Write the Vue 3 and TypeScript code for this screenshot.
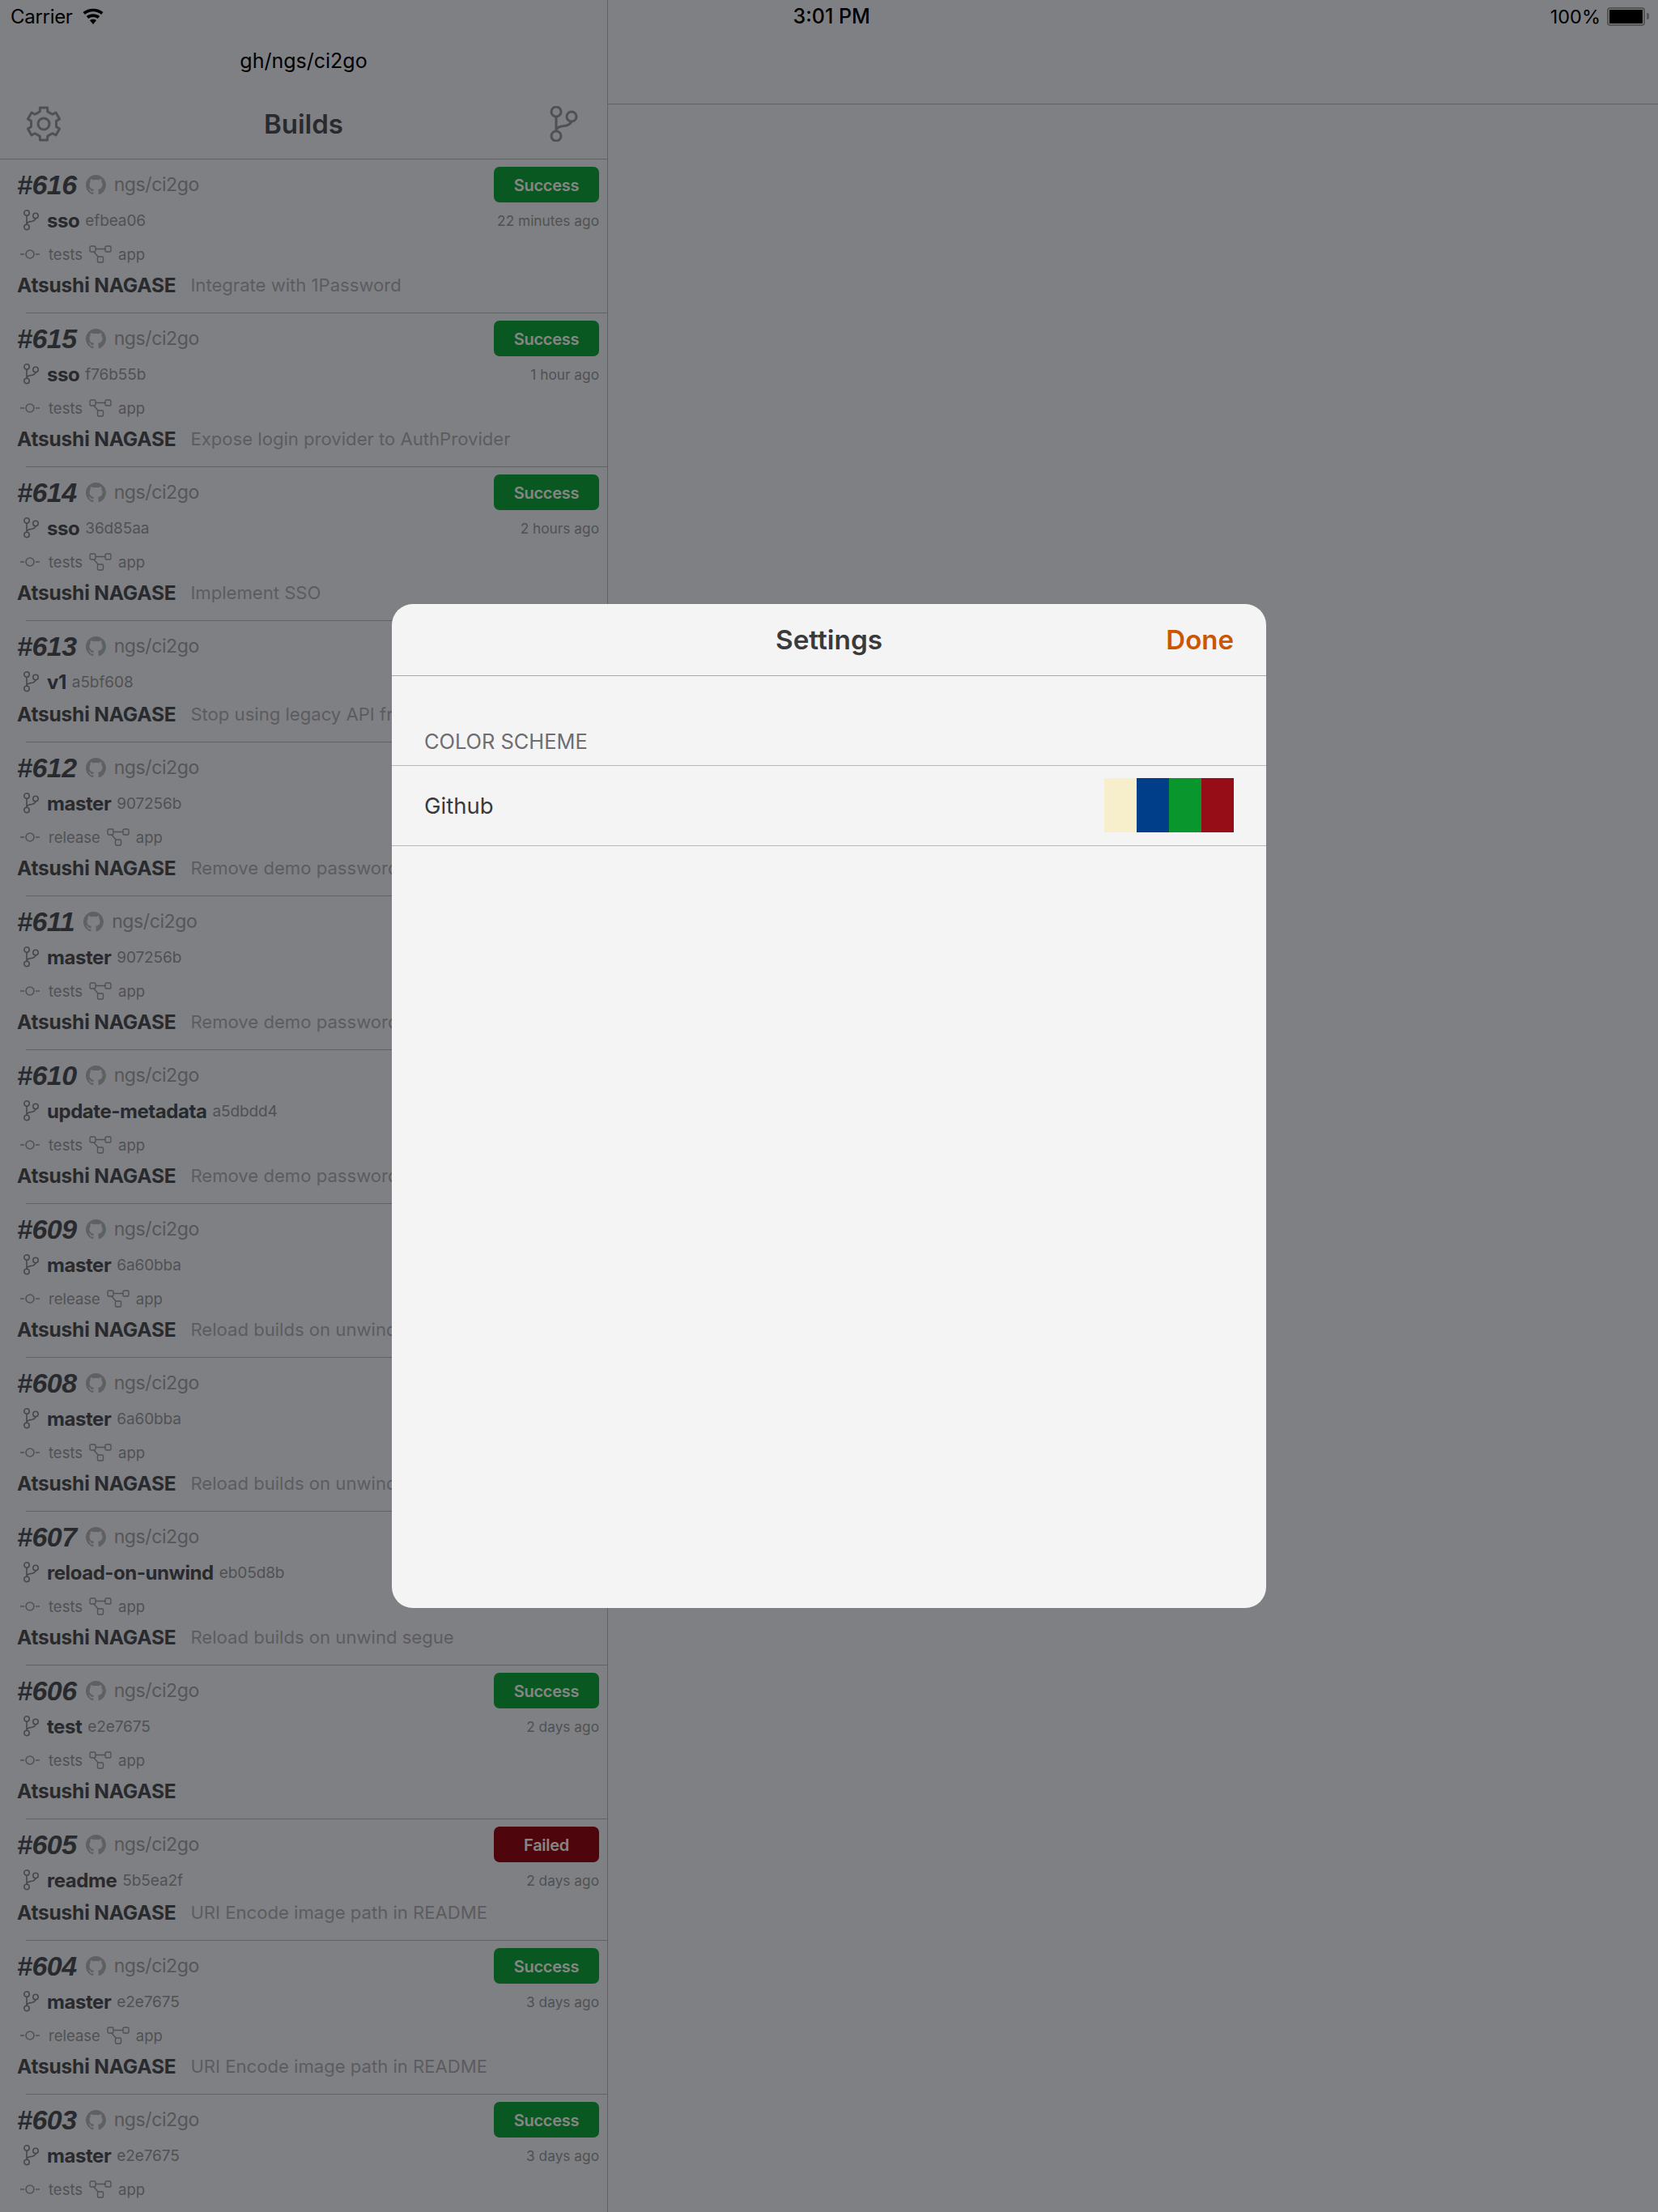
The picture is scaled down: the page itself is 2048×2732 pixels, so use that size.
<template>
    <div class="ipad">
        <div class="split">
            <aside class="master">
                <header class="master-head">
                    <div class="project">gh/ngs/ci2go</div>
                    <div class="nav-row">
                        <svg class="nav-icon" width="44" height="44" viewBox="0 0 44 44">
                            <path :d="gearPath" fill="none" stroke="#989aa0" stroke-width="3" stroke-linejoin="round" />
                            <circle cx="22" cy="22" r="7" fill="none" stroke="#989aa0" stroke-width="3" />
                        </svg>
                        <span class="nav-title">Builds</span>
                        <svg class="nav-icon" width="36" height="44" viewBox="0 0 36 44">
                            <circle cx="9" cy="7" r="6" fill="none" stroke="#989aa0" stroke-width="3" />
                            <circle cx="28" cy="13" r="6" fill="none" stroke="#989aa0" stroke-width="3" />
                            <circle cx="9" cy="37" r="6" fill="none" stroke="#989aa0" stroke-width="3" />
                            <path d="M9 13V31M9 29C12 24 18 25 22 24C25 23 27 21 28 19" fill="none" stroke="#989aa0" stroke-width="3" />
                        </svg>
                    </div>
                </header>
                <div class="build-list">
                    <div class="build" v-for="b in builds" :key="b.num" :class="{ short: !b.job }">
                        <div class="line-1">
                            <span class="num">#{{ b.num }}</span>
                            <svg class="gh" width="25" height="25" viewBox="0 0 16 16">
                                <path fill="#b7b8bd" d="M8 0C3.58 0 0 3.58 0 8c0 3.54 2.29 6.53 5.47 7.59.4.07.55-.17.55-.38 0-.19-.01-.82-.01-1.49-2.01.37-2.53-.49-2.69-.94-.09-.23-.48-.94-.82-1.13-.28-.15-.68-.52-.01-.53.63-.01 1.08.58 1.23.82.72 1.21 1.87.87 2.33.66.07-.52.28-.87.51-1.07-1.78-.2-3.64-.89-3.64-3.95 0-.87.31-1.59.82-2.15-.08-.2-.36-1.02.08-2.12 0 0 .67-.21 2.2.82.64-.18 1.32-.27 2-.27.68 0 1.36.09 2 .27 1.53-1.04 2.2-.82 2.2-.82.44 1.1.16 1.92.08 2.12.51.56.82 1.27.82 2.15 0 3.07-1.87 3.75-3.65 3.95.29.25.54.73.54 1.48 0 1.07-.01 1.93-.01 2.2 0 .21.15.46.55.38A8.013 8.013 0 0 0 16 8c0-4.42-3.58-8-8-8z" />
                            </svg>
                            <span class="repo">ngs/ci2go</span>
                            <span class="badge" :class="b.status">{{ b.status == 'failed' ? 'Failed' : 'Success' }}</span>
                        </div>
                        <div class="line-2">
                            <svg class="branch-icon" width="20" height="26" viewBox="0 0 20 26">
                                <circle cx="5" cy="4" r="3.2" fill="none" stroke="#87898e" stroke-width="1.6" />
                                <circle cx="16" cy="7.5" r="3.2" fill="none" stroke="#87898e" stroke-width="1.6" />
                                <circle cx="5" cy="21.5" r="3.2" fill="none" stroke="#87898e" stroke-width="1.6" />
                                <path d="M5 7.2V18.3M5 17C7 14 11 15 13 14C15 13 16 12 16 10.7" fill="none" stroke="#87898e" stroke-width="1.6" />
                            </svg>
                            <span class="branch">{{ b.branch }}</span>
                            <span class="sha">{{ b.sha }}</span>
                            <span class="time">{{ b.time }}</span>
                        </div>
                        <div class="line-3" v-if="b.job">
                            <svg class="commit-icon" width="26" height="14" viewBox="0 0 26 14">
                                <circle cx="13" cy="7" r="5" fill="none" stroke="#9a9ba0" stroke-width="1.6" />
                                <path d="M1 7H6M20 7H25" stroke="#9a9ba0" stroke-width="1.6" />
                            </svg>
                            <span class="job">{{ b.job }}</span>
                            <svg class="flow-icon" width="28" height="22" viewBox="0 0 28 22">
                                <rect x="1" y="1" width="7" height="7" rx="1.5" fill="none" stroke="#9a9ba0" stroke-width="1.4" />
                                <rect x="20" y="1" width="7" height="7" rx="1.5" fill="none" stroke="#9a9ba0" stroke-width="1.4" />
                                <rect x="10.5" y="14" width="7" height="7" rx="1.5" fill="none" stroke="#9a9ba0" stroke-width="1.4" />
                                <path d="M8 4.5H20M6 8L11 14" fill="none" stroke="#9a9ba0" stroke-width="1.4" />
                            </svg>
                            <span class="job">app</span>
                        </div>
                        <div class="line-4">
                            <span class="author">Atsushi NAGASE</span>
                            <span class="message">{{ b.message }}</span>
                        </div>
                    </div>
                </div>
            </aside>
            <main class="detail">
                <div class="detail-head"></div>
            </main>
        </div>

        <div class="dim"></div>

        <div class="status-bar">
            <div class="carrier">
                <span>Carrier</span>
                <svg width="30" height="22" viewBox="0 0 30 22">
                    <path d="M15 21L11 16.2C13.2 14.4 16.8 14.4 19 16.2Z M9.2 14L6.8 11.1C11.4 7.3 18.6 7.3 23.2 11.1L20.8 14C17.4 11.3 12.6 11.3 9.2 14Z M4.9 8.9L2.5 6C9.5 0.2 20.5 0.2 27.5 6L25.1 8.9C19.3 4.1 10.7 4.1 4.9 8.9Z" fill="#000" />
                </svg>
            </div>
            <div class="clock">3:01 PM</div>
            <div class="battery">
                <span>100%</span>
                <div class="cell"><div class="fill"></div></div>
                <div class="nub"></div>
            </div>
        </div>

        <section class="sheet">
            <div class="sheet-nav">
                <span class="sheet-title">Settings</span>
                <span class="done">Done</span>
            </div>
            <div class="section-head">COLOR SCHEME</div>
            <div class="scheme-row">
                <span class="scheme-name">Github</span>
                <div class="swatches">
                    <i v-for="c in swatches" :key="c" :style="{ backgroundColor: c }"></i>
                </div>
            </div>
        </section>
    </div>
</template>

<script setup lang="ts">
    interface Build {
        num: number
        branch: string
        sha: string
        time: string
        job: string
        message: string
        status: string
    }

    const swatches: string[] = ['#f7eecb', '#003e8a', '#09962c', '#960c17']

    const builds: Build[] = [
        { num: 616, branch: 'sso', sha: 'efbea06', time: '22 minutes ago', job: 'tests', message: 'Integrate with 1Password', status: 'success' },
        { num: 615, branch: 'sso', sha: 'f76b55b', time: '1 hour ago', job: 'tests', message: 'Expose login provider to AuthProvider', status: 'success' },
        { num: 614, branch: 'sso', sha: '36d85aa', time: '2 hours ago', job: 'tests', message: 'Implement SSO', status: 'success' },
        { num: 613, branch: 'v1', sha: 'a5bf608', time: '2 hours ago', job: '', message: 'Stop using legacy API from', status: 'success' },
        { num: 612, branch: 'master', sha: '907256b', time: '1 day ago', job: 'release', message: 'Remove demo password', status: 'success' },
        { num: 611, branch: 'master', sha: '907256b', time: '1 day ago', job: 'tests', message: 'Remove demo password', status: 'success' },
        { num: 610, branch: 'update-metadata', sha: 'a5dbdd4', time: '1 day ago', job: 'tests', message: 'Remove demo password', status: 'success' },
        { num: 609, branch: 'master', sha: '6a60bba', time: '1 day ago', job: 'release', message: 'Reload builds on unwind segue', status: 'success' },
        { num: 608, branch: 'master', sha: '6a60bba', time: '1 day ago', job: 'tests', message: 'Reload builds on unwind segue', status: 'success' },
        { num: 607, branch: 'reload-on-unwind', sha: 'eb05d8b', time: '1 day ago', job: 'tests', message: 'Reload builds on unwind segue', status: 'success' },
        { num: 606, branch: 'test', sha: 'e2e7675', time: '2 days ago', job: 'tests', message: '', status: 'success' },
        { num: 605, branch: 'readme', sha: '5b5ea2f', time: '2 days ago', job: '', message: 'URI Encode image path in README', status: 'failed' },
        { num: 604, branch: 'master', sha: 'e2e7675', time: '3 days ago', job: 'release', message: 'URI Encode image path in README', status: 'success' },
        { num: 603, branch: 'master', sha: 'e2e7675', time: '3 days ago', job: 'tests', message: 'URI Encode image path in README', status: 'success' }
    ]

    // 歯車のアウトライン
    function makeGear(): string {
        const pts: string[] = []
        for (let i = 0; i < 6; i++) {
            const a = -90 + i * 60
            const list: [number, number][] = [[-30, 15.5], [-17, 16], [-13, 20.5], [13, 20.5], [17, 16]]
            for (const [off, r] of list) {
                const rad = ((a + off) * Math.PI) / 180
                pts.push(`${(22 + r * Math.cos(rad)).toFixed(1)} ${(22 + r * Math.sin(rad)).toFixed(1)}`)
            }
        }
        return 'M' + pts.join('L') + 'Z'
    }
    const gearPath = makeGear()
</script>

<style scoped>
.ipad {
    position: relative;
    width: 2048px;
    height: 2732px;
    overflow: hidden;
    background-color: #f4f6fe;
    font-family: Inter, "Liberation Sans", sans-serif;
}
.split {
    display: flex;
    height: 100%;
}
.master {
    width: 751px;
    flex-shrink: 0;
    border-right: 1px solid #babcc2;
    box-sizing: border-box;
    overflow: hidden;
}
.master-head {
    height: 197px;
    padding-top: 40px;
    box-sizing: border-box;
    border-bottom: 1px solid #babcc2;
}
.project {
    height: 70px;
    line-height: 70px;
    text-align: center;
    font-size: 25px;
    color: #000;
}
.nav-row {
    height: 86px;
    padding: 0 36px 0 32px;
    display: flex;
    align-items: center;
    justify-content: space-between;
}
.nav-title {
    margin-right: 4px;
    font-size: 33px;
    font-weight: 600;
    color: #505156;
}
.build {
    height: 190px;
    box-sizing: border-box;
    padding: 9px 10px 0 21px;
    position: relative;
}
.build.short {
    height: 150px;
}
.build::after {
    content: "";
    position: absolute;
    left: 32px;
    right: 0;
    bottom: 0;
    height: 1px;
    background-color: #babcc2;
}
.line-1 {
    height: 44px;
    display: flex;
    align-items: center;
}
.num {
    font-family: "Liberation Sans", Arial, sans-serif;
    font-size: 34px;
    font-weight: 700;
    font-style: italic;
    color: #505156;
    letter-spacing: -.5px;
}
.gh {
    margin-left: 11px;
}
.repo {
    margin-left: 10px;
    font-size: 23px;
    letter-spacing: -.4px;
    color: #a4a5aa;
}
.badge {
    margin-left: auto;
    width: 130px;
    height: 44px;
    line-height: 46px;
    text-align: center;
    border-radius: 7px;
    font-size: 20px;
    font-weight: 600;
    letter-spacing: -.3px;
    color: #fff;
}
.badge.success {
    background-color: #12a840;
}
.badge.failed {
    background-color: #960c17;
}
.line-2 {
    height: 44px;
    display: flex;
    align-items: center;
}
.branch-icon {
    margin-left: 7px;
    margin-right: 10px;
}
.branch {
    font-size: 24px;
    font-weight: 700;
    letter-spacing: -.45px;
    color: #505156;
}
.sha {
    margin-left: 7px;
    font-size: 19px;
    letter-spacing: -.1px;
    color: #9a9ba0;
}
.time {
    margin-left: auto;
    font-size: 17.3px;
    color: #9a9ba0;
}
.line-3 {
    height: 40px;
    display: flex;
    align-items: center;
}
.commit-icon {
    margin-left: 3px;
    margin-right: 10px;
}
.job {
    font-size: 18.5px;
    color: #9a9ba0;
}
.flow-icon {
    margin: 0 8px;
}
.line-4 {
    height: 32px;
    margin-top: 2px;
    display: flex;
    align-items: center;
    white-space: nowrap;
}
.build:last-child .line-4 {
    display: none;
}
.author {
    font-size: 24.5px;
    font-weight: 700;
    letter-spacing: -.2px;
    color: #505156;
}
.message {
    margin-left: 18px;
    font-size: 22.1px;
    color: #b0b1b6;
}
.detail {
    flex: 1;
}
.detail-head {
    height: 129px;
    box-sizing: border-box;
    border-bottom: 1px solid #babcc2;
}
.dim {
    position: absolute;
    inset: 0;
    background-color: rgba(0, 0, 0, .48);
}
.status-bar {
    position: absolute;
    left: 0;
    right: 0;
    top: 0;
    height: 40px;
    padding: 0 11px 0 13px;
    display: flex;
    align-items: center;
    justify-content: space-between;
    font-size: 24px;
    color: #000;
}
.carrier {
    display: flex;
    align-items: center;
    gap: 10px;
}
.carrier span {
    letter-spacing: -.3px;
}
.clock {
    margin-left: 10px;
    font-weight: 500;
    font-size: 25px;
}
.battery {
    display: flex;
    align-items: center;
    font-size: 23.5px;
}
.cell {
    margin-left: 8px;
    width: 47px;
    height: 23px;
    box-sizing: border-box;
    border: 2px solid #555;
    border-radius: 4px;
    padding: 1px;
}
.fill {
    height: 100%;
    background-color: #000;
    border-radius: 1px;
}
.nub {
    width: 3px;
    height: 8px;
    margin-left: 2px;
    background-color: #555;
    border-radius: 0 2px 2px 0;
}
.sheet {
    position: absolute;
    left: 484px;
    top: 746px;
    width: 1080px;
    height: 1240px;
    border-radius: 26px;
    background-color: #f4f4f4;
    overflow: hidden;
}
.sheet-nav {
    height: 89px;
    box-sizing: border-box;
    border-bottom: 1px solid #a9a9a9;
    padding: 0 40px;
    display: flex;
    align-items: center;
    justify-content: flex-end;
    position: relative;
}
.sheet-title {
    position: absolute;
    left: 0;
    right: 0;
    text-align: center;
    font-size: 33.3px;
    font-weight: 600;
    color: #3a3a3c;
}
.done {
    font-size: 33px;
    font-weight: 600;
    color: #cc5500;
}
.section-head {
    height: 111px;
    box-sizing: border-box;
    border-bottom: 1px solid #b8b8b8;
    padding: 0 40px 14px;
    display: flex;
    align-items: flex-end;
    font-size: 25.4px;
    color: #6d6d72;
}
.scheme-row {
    height: 99px;
    box-sizing: border-box;
    border-bottom: 1px solid #b8b8b8;
    padding: 0 40px;
    display: flex;
    align-items: center;
    justify-content: space-between;
}
.scheme-name {
    font-size: 27.5px;
    color: #3a3a3c;
}
.swatches {
    display: flex;
    margin-bottom: 1px;
}
.swatches i {
    display: block;
    width: 40px;
    height: 67px;
}
</style>
